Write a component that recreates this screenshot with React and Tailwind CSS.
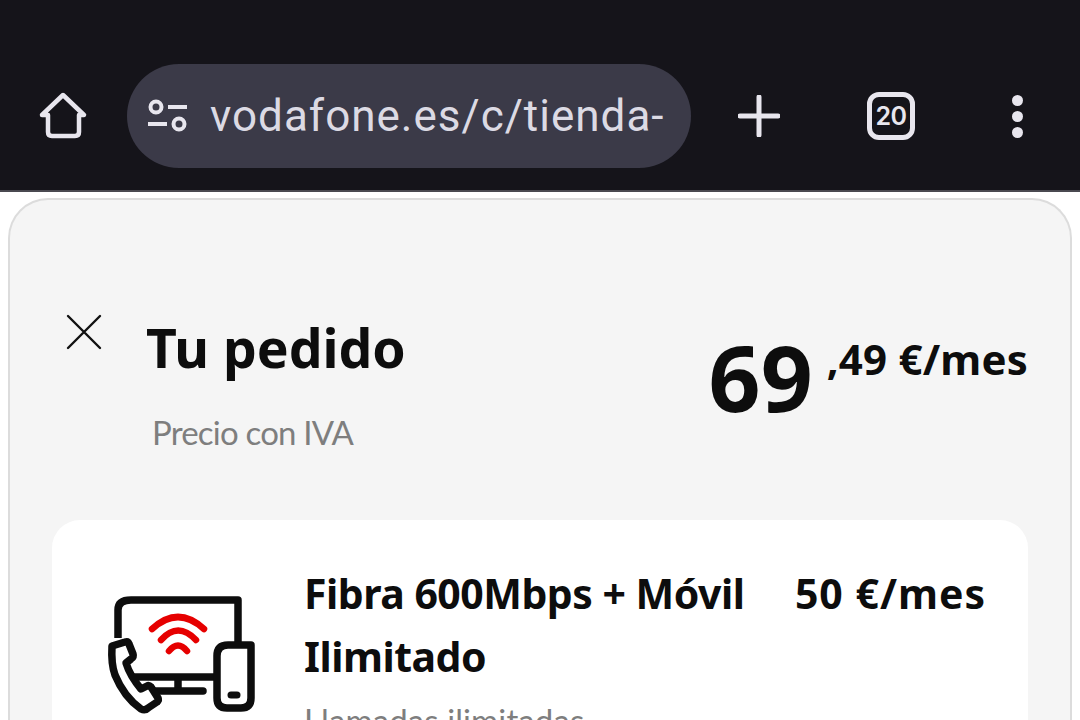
import React from 'react';

const HomeIcon = () => (
  <svg width="50" height="50" viewBox="0 0 50 50" fill="none" stroke="#e8e6ee" strokeWidth="4.5" strokeLinejoin="round" strokeLinecap="round">
    <path d="M4 24 L25 4 L46 24 H41 V41 Q41 45 37 45 H14 Q10 45 10 41 V24 Z" />
  </svg>
);

const SiteIcon = () => (
  <svg width="42" height="34" viewBox="0 0 42 34" fill="none" stroke="#e8e6ee" strokeWidth="4" strokeLinecap="butt">
    <circle cx="9" cy="8" r="5.5" />
    <path d="M21 8 H40" />
    <path d="M1 25 H20" />
    <circle cx="32" cy="25" r="5.5" />
  </svg>
);

const PhoneBundleIcon = () => (
  <svg width="200" height="140" viewBox="0 0 200 140" fill="none" stroke="#0d0d0d" strokeWidth="7.5" strokeLinecap="round" strokeLinejoin="round">
    <path d="M28 58 V30 Q28 20 41 20 H148 V62" strokeLinecap="butt" />
    <path d="M44 97 H124" strokeLinecap="butt" />
    <path d="M88 98 V110" strokeLinecap="butt" />
    <path d="M66 111 H113" />
    <path d="M161 65 H138 Q127 65 127 76 V118 Q127 128 137 128 H151 Q161 128 161 118 Z" fill="#fff" />
    <path d="M141 115 H147" strokeWidth="7" />
    <path d="M22 66 L35 62 Q38 61 39 64 L43 74 Q44 77 41 79 L36 83 Q40 96 51 109 L57 106 Q59 105 61 107 L68 118 Q69 120 67 122 L58 128 Q55 131 51 129 Q34 117 25 95 Q21 84 22 66 Z" fill="#fff" />
    <g stroke="#e60000" strokeWidth="6.5">
      <path d="M62 49 Q88 25 114 49" />
      <path d="M71 60 Q88 41 106 60" />
      <path d="M79 71 Q88 60 97 71" />
    </g>
  </svg>
);

export default function App() {
  return (
    <div className="w-[1080px] h-[720px] overflow-hidden bg-white font-['Noto_Sans',sans-serif]">
      {/* browser chrome */}
      <div className="h-[192px] bg-[#15141a] border-b-2 border-[#4a4950] pt-16 flex items-start">
        <div className="w-[127px] h-[104px] pl-[38px] flex items-center">
          <HomeIcon />
        </div>
        <div className="w-[564px] h-[104px] rounded-[52px] bg-[#3b3a48] flex items-center pl-[20px] overflow-hidden">
          <SiteIcon />
          <span className="ml-[21px] text-[44px] leading-none tracking-[1px] text-[#dcdae4] whitespace-nowrap font-['Roboto',sans-serif] font-normal">vodafone.es/c/tienda-</span>
        </div>
        <div className="w-[389px] h-[104px] flex items-center">
          <svg className="ml-[47px]" width="42" height="42" viewBox="0 0 42 42" stroke="#e8e6ee" strokeWidth="5" strokeLinecap="round">
            <path d="M2 21 H40 M21 2 V40" />
          </svg>
          <div className="ml-[87px] w-[48px] h-[48px] border-[5px] border-[#e8e6ee] rounded-[12px] flex items-center justify-center text-[25px] font-semibold text-[#e8e6ee] font-['Inter',sans-serif] leading-none tracking-[-0.5px]">20</div>
          <div className="ml-[97px] flex flex-col gap-[5px]">
            <div className="w-[11px] h-[11px] rounded-full bg-[#e8e6ee]" />
            <div className="w-[11px] h-[11px] rounded-full bg-[#e8e6ee]" />
            <div className="w-[11px] h-[11px] rounded-full bg-[#e8e6ee]" />
          </div>
        </div>
      </div>

      {/* order sheet */}
      <div className="mx-2 mt-[6px] h-[600px] rounded-t-[40px] border-2 border-b-0 border-[#dcdcdc] bg-[#f5f5f5] px-[42px] pt-[112px]">
        <div className="flex items-start justify-between h-[208px]">
          <div className="flex items-start">
            <svg className="ml-[13px] mt-[1px]" width="38" height="38" viewBox="0 0 38 38" stroke="#111" strokeWidth="2.4" strokeLinecap="round">
              <path d="M3 3 L35 35 M35 3 L3 35" />
            </svg>
            <div className="ml-[43px]">
              <div className="text-[53.5px] leading-[72px] font-bold text-[#0d0d0d]">Tu pedido</div>
              <div className="mt-[26px] ml-[6px] text-[33px] leading-[44px] tracking-[-0.8px] text-[#7e7e7e] font-['Lato',sans-serif]">Precio con IVA</div>
            </div>
          </div>
          <div className="flex items-start text-[#0d0d0d] font-bold">
            <span className="text-[91px] leading-[130px]">69</span>
            <span className="ml-[14px] mt-[21px] text-[42px] leading-[52px] tracking-[0.2px] whitespace-nowrap">,49 €/mes</span>
          </div>
        </div>

        <div className="h-[300px] rounded-[28px] bg-white pl-[38px] pr-[42px] pt-[42px] flex items-start">
          <div className="mt-[18px] w-[200px] shrink-0">
            <PhoneBundleIcon />
          </div>
          <div className="ml-[14px] flex-1">
            <div className="flex items-start justify-between">
              <div className="w-[470px] text-[41px] leading-[63px] tracking-[-0.5px] font-bold text-[#0d0d0d]">Fibra 600Mbps + Móvil Ilimitado</div>
              <div className="text-[41px] leading-[63px] tracking-[1px] font-bold text-[#0d0d0d] whitespace-nowrap">50 €/mes</div>
            </div>
            <div className="mt-[12px] text-[33px] leading-[40px] tracking-[0.1px] text-[#7e7e7e] font-['Lato',sans-serif]">Llamadas ilimitadas</div>
          </div>
        </div>
      </div>
    </div>
  );
}
